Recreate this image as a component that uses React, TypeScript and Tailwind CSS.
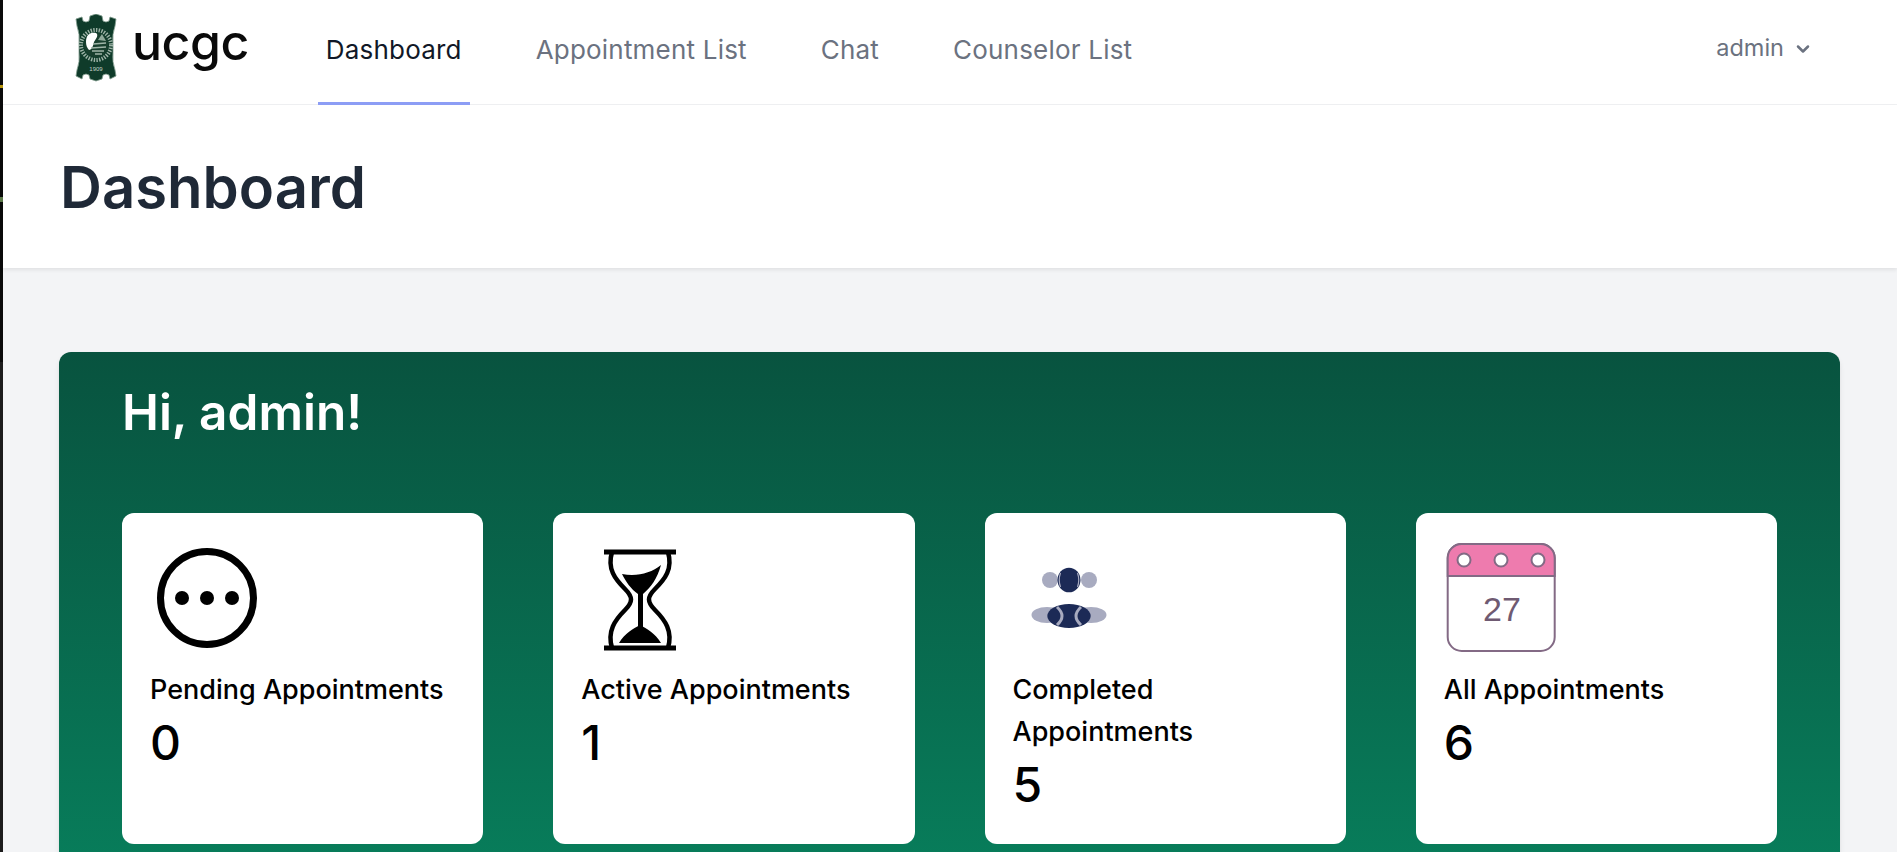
import React from 'react';
import { ChevronDown } from 'lucide-react';

const font = { fontFamily: 'Inter, "Liberation Sans", sans-serif' };

const navItems = [
  { label: 'Dashboard', active: true },
  { label: 'Appointment List', active: false },
  { label: 'Chat', active: false },
  { label: 'Counselor List', active: false },
];

const SealLogo = () => (
  <svg width="42" height="68" viewBox="0 0 42 68" className="shrink-0">
    <path
      d="M1 5 L7 3 L8 7 Q11 9 14 7 L15 2 L21 0 L27 2 L28 7 Q31 9 34 7 L35 3 L41 5 L40 12 Q37 20 38 30 L38 38 Q37 48 40 56 L41 62 L35 65 L34 61 Q31 59 28 61 L27 65 L21 67 L15 65 L14 61 Q11 59 8 61 L7 65 L1 62 L2 56 Q5 48 4 38 L4 30 Q5 20 2 12 Z"
      fill="#0f3b2a"
      stroke="#7f9a8c"
      strokeWidth="0.8"
    />
    <circle cx="21" cy="31" r="15" fill="none" stroke="#9db2a6" strokeWidth="4" strokeDasharray="1.4 1.3" />
    <circle cx="21" cy="31" r="12" fill="#183f2e" />
    <path d="M11 28 C11 20 16 18 21 19 C24 21 21 25 19 28 C18 32 17 36 14 36 C12 34 11 31 11 28 Z" fill="#ffffff" />
    <path d="M18 30 L31 29 M16 34 L31 33 M17 37 L29 37 M20 40 L27 40" stroke="#9fb5a8" strokeWidth="1.5" />
    <path d="M23 26 L27 20 L31 27 Z" fill="#8fa99a" />
    <text x="21" y="57" textAnchor="middle" fontSize="6" fill="#c4d2c9" fontFamily="Liberation Sans, sans-serif">
      1909
    </text>
  </svg>
);

const PendingIcon = () => (
  <svg width="120" height="120" viewBox="0 0 120 120" className="block">
    <circle cx="57" cy="61" r="46.5" fill="none" stroke="#000" strokeWidth="7" />
    <circle cx="32" cy="61" r="7" />
    <circle cx="57" cy="61" r="7" />
    <circle cx="82" cy="61" r="7" />
  </svg>
);

const HourglassIcon = () => (
  <svg width="120" height="120" viewBox="0 0 120 120" className="block">
    <path d="M23 15 H95 M23 111 H95" stroke="#000" strokeWidth="5" fill="none" />
    <path
      d="M31 15 C26 32 34 42 44 52 C52 60 52 65 44 73 C34 83 26 94 31 111 M87 15 C92 32 84 42 74 52 C66 60 66 65 74 73 C84 83 92 94 87 111"
      stroke="#000"
      strokeWidth="4.5"
      fill="none"
    />
    <path d="M41 37 C56 40 70 36 80 28 C76 42 70 50 62 57 L62 98 L57 98 L57 57 C50 52 45 45 41 37 Z" />
    <path d="M38 106 C44 96 52 92 59 88 C66 92 74 96 80 106 Z" />
  </svg>
);

const GroupIcon = () => (
  <svg width="120" height="120" viewBox="0 0 120 120" className="block">
    <circle cx="37" cy="43" r="8" fill="#a8abc0" />
    <circle cx="76" cy="43" r="8" fill="#a8abc0" />
    <ellipse cx="56" cy="43" rx="11.5" ry="12.3" fill="#1c2a56" />
    <path d="M47.5 36 Q45 43 47.5 50 M64.5 36 Q67 43 64.5 50" stroke="#a8abc0" strokeWidth="1.2" fill="none" />
    <ellipse cx="34" cy="78" rx="15.5" ry="8" fill="#a8abc0" />
    <ellipse cx="78" cy="78" rx="15.5" ry="8" fill="#a8abc0" />
    <ellipse cx="56" cy="79" rx="21.7" ry="12" fill="#1c2a56" />
    <path d="M44 70 Q54 79 44 88 M68 70 Q58 79 68 88" stroke="#a8abc0" strokeWidth="3" fill="none" />
  </svg>
);

const CalendarIcon = () => (
  <svg width="120" height="120" viewBox="0 0 120 120" className="ml-px block">
    <rect x="2.7" y="7" width="107" height="107" rx="14" fill="#fff" stroke="#836a85" strokeWidth="2" />
    <path d="M2.7 39 V21 a14 14 0 0 1 14 -14 H95.7 a14 14 0 0 1 14 14 V39 Z" fill="#ee7bae" stroke="#836a85" strokeWidth="2" />
    <circle cx="19" cy="23" r="6.5" fill="#fff" stroke="#836a85" strokeWidth="2" />
    <circle cx="56" cy="23" r="6.5" fill="#fff" stroke="#836a85" strokeWidth="2" />
    <circle cx="93" cy="23" r="6.5" fill="#fff" stroke="#836a85" strokeWidth="2" />
    <text x="57" y="84" textAnchor="middle" fontSize="34" fill="#6f5a72" fontFamily="Liberation Sans, sans-serif">
      27
    </text>
  </svg>
);

const cards = [
  { icon: <PendingIcon />, label: 'Pending Appointments', value: 0 },
  { icon: <HourglassIcon />, label: 'Active Appointments', value: 1 },
  { icon: <GroupIcon />, label: 'Completed Appointments', value: 5 },
  { icon: <CalendarIcon />, label: 'All Appointments', value: 6 },
];

export default function App() {
  return (
    <div className="flex h-screen overflow-hidden bg-[#f3f4f6]" style={font}>
      {/* sliver of the desktop behind the browser window */}
      <div className="flex w-[3px] shrink-0 flex-col bg-[#0a0a0a]">
        <div className="h-[85px]" />
        <div className="h-[3px] bg-[#b8960c]" />
        <div className="h-[109px]" />
        <div className="h-[5px] bg-[#5d7a4a]" />
        <div className="h-[160px]" />
        <div className="flex-1 bg-[#1c1c1c]" />
      </div>

      <div className="min-w-0 flex-1">
        <nav className="flex h-[105px] items-stretch border-b border-[#f0f1f3] bg-white pl-[72px] pr-[84px]">
          <div className="flex items-start pt-[14px]">
            <SealLogo />
            <span className="ml-[15px] mt-[-6px] text-[50px] font-medium leading-[68px] tracking-[-0.5px] text-[#0a0a0a]">
              ucgc
            </span>
          </div>
          <div className="ml-[69px] flex items-stretch gap-[58px]">
            {navItems.map((item) => (
              <a
                key={item.label}
                className={`-mb-px flex items-start border-b-[3px] px-2 pt-[34px] text-[26px] leading-[32px] tracking-[0.2px] ${
                  item.active ? 'border-[#8c9df5] text-[#111827]' : 'border-transparent text-[#6b7280]'
                }`}
              >
                {item.label}
              </a>
            ))}
          </div>
          <div className="ml-auto flex items-start gap-[9px] pt-[34px] text-[23.5px] leading-[28px] text-[#6b7280]">
            admin
            <ChevronDown size={20} strokeWidth={3} className="mt-[5px]" />
          </div>
        </nav>

        <header className="flex h-[163px] items-center bg-white pl-[57px] shadow-[0_2px_4px_rgba(0,0,0,0.08)]">
          <h1 className="text-[58px] font-semibold leading-none text-[#1f2937]">Dashboard</h1>
        </header>

        <main className="pl-[56px] pr-[57px] pt-[84px]">
          <section className="h-[600px] rounded-xl bg-gradient-to-b from-[#08533f] to-[#07845f] px-[63px] pt-[30px] shadow-md">
            <h2 className="text-[49.5px] font-semibold leading-[60px] text-white">Hi, admin!</h2>
            <div className="mt-[71px] grid grid-cols-4 gap-[70px]">
              {cards.map((card) => (
                <div key={card.label} className="h-[331px] rounded-xl bg-white px-[28px] pt-[24px] text-black">
                  {card.icon}
                  <div className="mt-[12px] text-[27px] font-medium leading-[42px]">{card.label}</div>
                  <div className="text-[48px] font-medium leading-[63px]">{card.value}</div>
                </div>
              ))}
            </div>
          </section>
        </main>
      </div>
    </div>
  );
}
